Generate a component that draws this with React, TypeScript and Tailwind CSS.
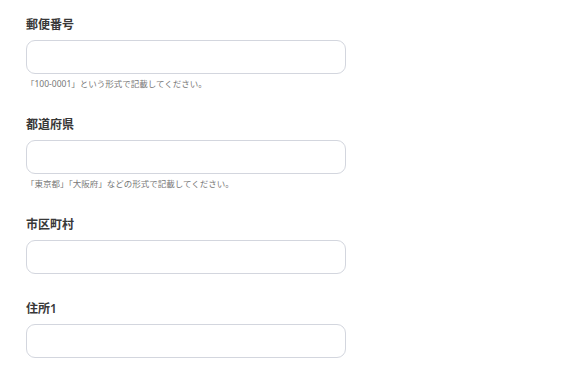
import React from "react"

type Field = {
    label: string
    help?: string
}

const fields: Field[] = [
    { label: "郵便番号", help: "「100-0001」という形式で記載してください。" },
    { label: "都道府県", help: "「東京都」「大阪府」などの形式で記載してください。" },
    { label: "市区町村" },
    { label: "住所1" },
]

const FormField = ({ label, help }: Field) => (
    <div className="flex flex-col">
        <label className="mb-[7px] text-[12px] leading-[16px] font-semibold text-[#383838]">{label}</label>
        <input
            type="text"
            className="h-[34px] w-[320px] rounded-[9px] border border-[#d3d6de] bg-white px-3 text-[13px] outline-none"
        />
        {help && <p className="mt-[4px] text-[8.5px] leading-[12px] text-[#777777]">{help}</p>}
    </div>
)

export default function App() {
    return (
        <div
            className="min-h-screen bg-white pl-[26px] pt-[17px]"
            style={{ fontFamily: '"Noto Sans", "Noto Sans CJK JP", sans-serif' }}
        >
            <div className="flex flex-col gap-[27px]">
                {fields.map((f) => (
                    <FormField key={f.label} {...f} />
                ))}
            </div>
        </div>
    )
}
